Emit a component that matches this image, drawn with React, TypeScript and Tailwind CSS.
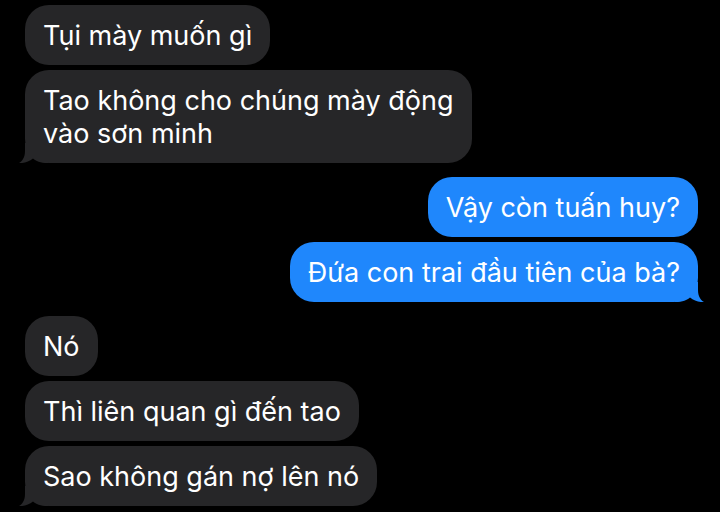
import React from 'react'

type Msg = {
  text: string[]
  mine?: boolean
  tail?: boolean
  gapTop: 'small' | 'large' | 'none'
}

const messages: Msg[] = [
  { text: ['Tụi mày muốn gì'], gapTop: 'none' },
  { text: ['Tao không cho chúng mày động', 'vào sơn minh'], tail: true, gapTop: 'small' },
  { text: ['Vậy còn tuấn huy?'], mine: true, gapTop: 'large' },
  { text: ['Đứa con trai đầu tiên của bà?'], mine: true, tail: true, gapTop: 'small' },
  { text: ['Nó'], gapTop: 'large' },
  { text: ['Thì liên quan gì đến tao'], gapTop: 'small' },
  { text: ['Sao không gán nợ lên nó'], tail: true, gapTop: 'small' },
]

const Tail = ({ mine }: { mine?: boolean }) => (
  <svg
    width="30"
    height="20"
    viewBox="0 0 30 20"
    className={`absolute bottom-0 ${mine ? 'right-[-7px] scale-x-[-1]' : 'left-[-7px]'}`}
  >
    <path
      d="M7 0 L7 8 C7 14 4.5 18 1 20 C6 20.5 11 18.5 15 15.5 C18 18 22 20 30 20 L30 0 Z"
      fill={mine ? '#1f87fc' : '#262628'}
    />
  </svg>
)

const Bubble = ({ msg }: { msg: Msg }) => {
  const gap =
    msg.gapTop === 'large' ? 'mt-[14px]' : msg.gapTop === 'small' ? 'mt-[5px]' : 'mt-0'

  return (
    <div
      className={`relative w-fit rounded-[24px] px-[18px] py-[13.5px] text-[27px] leading-[33px] text-white ${gap} ${
        msg.mine ? 'self-end bg-[#1f87fc]' : 'self-start bg-[#262628]'
      }`}
    >
      {msg.tail && <Tail mine={msg.mine} />}
      <p className="relative whitespace-nowrap">
        {msg.text.map((line, i) => (
          <span className="block" key={i}>
            {line}
          </span>
        ))}
      </p>
    </div>
  )
}

export default function App() {
  return (
    <div
      className="w-[720px] h-[512px] overflow-hidden bg-black flex flex-col pl-[25px] pr-[22px] pt-[5px]"
      style={{ fontFamily: 'Inter, "Noto Sans", sans-serif' }}
    >
      {messages.map((m, i) => (
        <Bubble msg={m} key={i} />
      ))}
    </div>
  )
}
